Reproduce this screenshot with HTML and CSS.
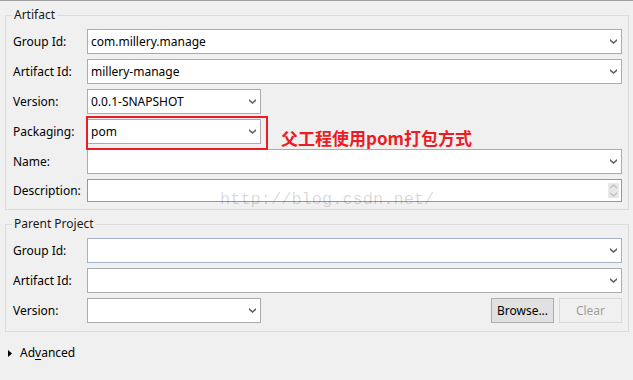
FILE: index.html
```html
<!DOCTYPE html>
<html>
<head>
<meta charset="utf-8">
<link rel="stylesheet" href="styles.css">
</head>
<body>
<div class="page">
  <fieldset class="group group-artifact">
    <legend>Artifact</legend>
    <div class="rows">
      <div class="row"><span class="label">Group Id:</span><div class="field wide"><span class="val">com.millery.manage</span><svg class="chev" width="7" height="5" viewBox="0 0 7 5"><polygon points="0,0 3.5,3 7,0 7,2 3.5,5 0,2"/></svg></div></div>
      <div class="row"><span class="label">Artifact Id:</span><div class="field wide"><span class="val">millery-manage</span><svg class="chev" width="7" height="5" viewBox="0 0 7 5"><polygon points="0,0 3.5,3 7,0 7,2 3.5,5 0,2"/></svg></div></div>
      <div class="row"><span class="label">Version:</span><div class="field short"><span class="val">0.0.1-SNAPSHOT</span><svg class="chev" width="7" height="5" viewBox="0 0 7 5"><polygon points="0,0 3.5,3 7,0 7,2 3.5,5 0,2"/></svg></div></div>
      <div class="row"><span class="label">Packaging:</span><div class="field short"><span class="val">pom</span><svg class="chev" width="7" height="5" viewBox="0 0 7 5"><polygon points="0,0 3.5,3 7,0 7,2 3.5,5 0,2"/></svg></div></div>
      <div class="row"><span class="label">Name:</span><div class="field wide"><span class="val"></span><svg class="chev" width="7" height="5" viewBox="0 0 7 5"><polygon points="0,0 3.5,3 7,0 7,2 3.5,5 0,2"/></svg></div></div>
      <div class="row row-desc"><span class="label">Description:</span><div class="field wide desc"><span class="val"></span><div class="spin"><svg width="7" height="5" viewBox="0 0 7 5"><polygon points="0,5 3.5,2 7,5 7,3 3.5,0 0,3"/></svg><svg width="7" height="5" viewBox="0 0 7 5"><polygon points="0,0 3.5,3 7,0 7,2 3.5,5 0,2"/></svg></div></div></div>
    </div>
  </fieldset>
  <fieldset class="group group-parent">
    <legend>Parent Project</legend>
    <div class="rows">
      <div class="row"><span class="label">Group Id:</span><div class="field wide hover"><span class="val"></span><svg class="chev" width="7" height="5" viewBox="0 0 7 5"><polygon points="0,0 3.5,3 7,0 7,2 3.5,5 0,2"/></svg></div></div>
      <div class="row"><span class="label">Artifact Id:</span><div class="field wide"><span class="val"></span><svg class="chev" width="7" height="5" viewBox="0 0 7 5"><polygon points="0,0 3.5,3 7,0 7,2 3.5,5 0,2"/></svg></div></div>
      <div class="row"><span class="label">Version:</span><div class="field short"><span class="val"></span><svg class="chev" width="7" height="5" viewBox="0 0 7 5"><polygon points="0,0 3.5,3 7,0 7,2 3.5,5 0,2"/></svg></div>
        <div class="buttons"><span class="btn">Browse...</span><span class="btn disabled">Clear</span></div>
      </div>
    </div>
  </fieldset>
  <div class="advanced"><svg class="tri" width="4" height="7" viewBox="0 0 4 7"><polygon points="0,0 4,3.5 0,7"/></svg><span>Ad<u>v</u>anced</span></div>

  <div class="redbox"></div>
  <div class="note">父工程使用pom打包方式</div>
  <div class="watermark">http://blog.csdn.net/</div>
</div>
</body>
</html>
```
FILE: styles.css
```css
html, body {
  margin: 0;
  padding: 0;
}
body {
  width: 633px;
  height: 380px;
  overflow: hidden;
  background: #f0f0f0;
  font-family: "Noto Sans", "Segoe UI", sans-serif;
  font-size: 12px;
  color: #000;
}
.page {
  position: relative;
  height: 379px;
  border-top: 1px solid #a0a0a0;
}
.group {
  margin: 0 0 0 5px;
  width: 624px;
  box-sizing: border-box;
  border: 1px solid #dcdcdc;
  padding: 6px 6px 7px 7px;
  min-width: 0;
}
.group-artifact {
  margin-top: 6px;
}
.group-parent {
  margin-top: 6px;
  padding-bottom: 8px;
}
legend {
  padding: 0 2px;
  margin-left: -1px;
  line-height: 16px;
  font-size: 12px;
  color: #1a1a1a;
}
.rows {
  display: flex;
  flex-direction: column;
  gap: 5px;
}
.row {
  display: flex;
  align-items: center;
  height: 25px;
}
.row-desc {
  height: 23px;
}
.label {
  width: 74px;
  flex: none;
  line-height: 16px;
}
.field {
  box-sizing: border-box;
  height: 100%;
  background: #fff;
  border: 1px solid #ababab;
  display: flex;
  align-items: center;
  justify-content: space-between;
  padding: 0 4px 0 3px;
}
.field.wide {
  flex: 1;
}
.field.short {
  width: 174px;
  flex: none;
}
.field.hover {
  border-color: #a4b3c7;
}
.field.desc {
  border-color: #6da2d9;
  padding-right: 4px;
}
.val {
  white-space: nowrap;
}
.chev {
  fill: #5f5f5f;
  flex: none;
}
.spin {
  width: 11px;
  height: 15px;
  background: #e8e8e8;
  display: flex;
  flex-direction: column;
  align-items: center;
  justify-content: space-around;
  fill: #c4c4c4;
  margin-right: -2px;
}
.buttons {
  margin-left: auto;
  display: flex;
  gap: 5px;
  height: 100%;
}
.btn {
  box-sizing: border-box;
  width: 63px;
  height: 100%;
  border: 1px solid #adadad;
  background: #e1e1e1;
  display: flex;
  align-items: center;
  justify-content: center;
}
.btn.disabled {
  border-color: #d9d9d9;
  background: #f0f0f0;
  color: #a0a0a0;
}
.advanced {
  margin-top: 13px;
  margin-left: 8px;
  display: flex;
  align-items: center;
  gap: 8px;
  line-height: 16px;
  font-size: 12px;
}
.tri {
  fill: #000;
}
.advanced u {
  text-underline-offset: 2px;
}

/* annotations drawn over the form */
.redbox {
  position: absolute;
  left: 86px;
  top: 115px;
  width: 182px;
  height: 34px;
  box-sizing: border-box;
  border: 2px solid #ec1c24;
}
.note {
  position: absolute;
  left: 281px;
  top: 126px;
  font-family: "Noto Sans CJK SC", "Noto Sans", sans-serif;
  font-weight: 700;
  font-size: 17px;
  line-height: 22px;
  color: #ec1c24;
  white-space: nowrap;
}
.watermark {
  position: absolute;
  left: 220px;
  top: 189px;
  font-family: "Liberation Mono", monospace;
  font-size: 17px;
  line-height: 20px;
  color: rgba(0, 0, 0, 0.16);
  white-space: nowrap;
}
```
